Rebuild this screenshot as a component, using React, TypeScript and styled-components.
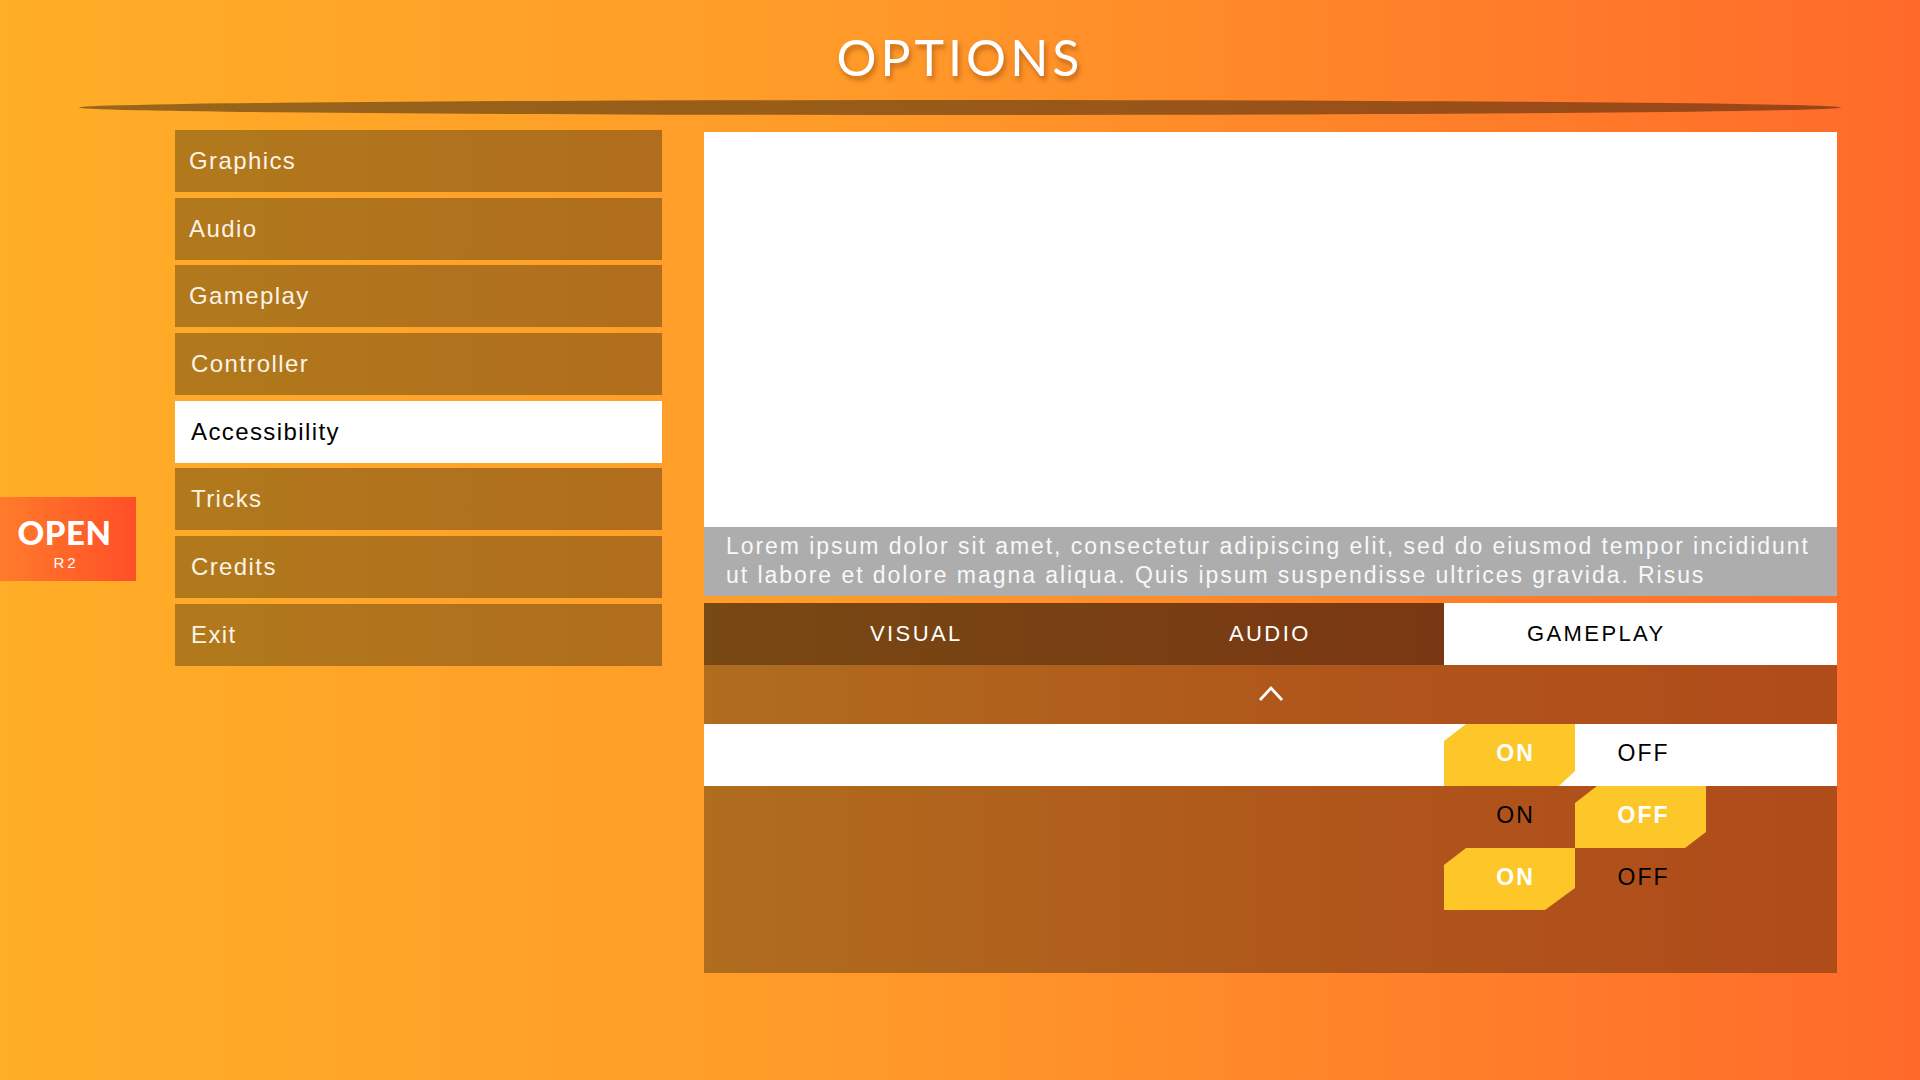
import React from "react";
import styled, { createGlobalStyle } from "styled-components";

const GlobalStyle = createGlobalStyle`
  html, body {
    margin: 0;
    padding: 0;
  }
  body {
    width: 1920px;
    height: 1080px;
    overflow: hidden;
    font-family: "Liberation Sans", Arial, sans-serif;
  }
  * { box-sizing: border-box; }
`;

const Page = styled.div`
  position: relative;
  width: 1920px;
  height: 1080px;
  background: linear-gradient(90deg, #ffae27 0%, #ff9a29 45%, #ff6a2a 100%);
  display: flex;
  flex-direction: column;
`;

const Header = styled.header`
  display: flex;
  flex-direction: column;
  align-items: center;
  padding-top: 32px;
`;

const Title = styled.h1`
  margin: 0;
  font-family: Lato, "Noto Sans", sans-serif;
  font-weight: 400;
  font-size: 50px;
  line-height: 50px;
  letter-spacing: 4px;
  color: #ffffff;
  text-shadow: 2px 4px 5px rgba(120, 50, 0, 0.45);
`;

const Divider = styled.div`
  width: 1762px;
  height: 15px;
  margin-top: 18px;
  border-radius: 50%;
  background: linear-gradient(90deg, #98661a 0%, #985a19 50%, #9a4419 100%);
`;

const Main = styled.main`
  display: flex;
  align-items: flex-start;
  gap: 42px;
  padding-left: 175px;
  margin-top: 15px;
`;

const Menu = styled.nav`
  width: 487px;
  display: flex;
  flex-direction: column;
  gap: 5.67px;
`;

const MenuItem = styled.div<{ $active?: boolean; $indent?: number }>`
  height: 62px;
  display: flex;
  align-items: center;
  padding-left: ${(p) => p.$indent ?? 14}px;
  font-size: 24px;
  letter-spacing: 1.4px;
  color: ${(p) => (p.$active ? "#000000" : "#fbf3e6")};
  background: ${(p) =>
    p.$active ? "#ffffff" : "linear-gradient(90deg, #b1791c 0%, #b06d1d 100%)"};
`;

const SideTab = styled.div`
  position: absolute;
  left: 0;
  top: 497px;
  width: 136px;
  height: 84px;
  display: flex;
  flex-direction: column;
  align-items: center;
  padding: 19px 7px 0 0;
  background: linear-gradient(90deg, #ff7c2b 0%, #ff4e27 100%);
  color: #ffffff;
`;

const SideTabTitle = styled.div`
  font-family: Lato, "Noto Sans", sans-serif;
  font-weight: 900;
  font-size: 33px;
  line-height: 33px;
  letter-spacing: 0.5px;
`;

const SideTabKey = styled.div`
  font-family: "Liberation Sans", Arial, sans-serif;
  font-size: 15px;
  line-height: 15px;
  margin-top: 6px;
  letter-spacing: 3px;
  padding-left: 3px;
`;

const Panel = styled.section`
  width: 1133px;
  margin-top: 2px;
  display: flex;
  flex-direction: column;
`;

const Preview = styled.div`
  height: 395px;
  background: #ffffff;
`;

const Caption = styled.p`
  margin: 0;
  height: 69px;
  padding: 5px 22px 0;
  background: #adadad;
  color: #f8f8f8;
  font-size: 23px;
  line-height: 29px;
  letter-spacing: 1.95px;
`;

const TabBar = styled.div`
  margin-top: 7px;
  height: 62px;
  display: flex;
`;

const DarkTabs = styled.div`
  width: 740px;
  display: flex;
  background: linear-gradient(90deg, #774913 0%, #7a3713 100%);
`;

const Tab = styled.div<{ $active?: boolean; $pad: number }>`
  ${(p) => (p.$active ? "flex: 1;" : "width: 370px;")}
  display: flex;
  align-items: center;
  padding-left: ${(p) => p.$pad}px;
  font-size: 22px;
  letter-spacing: 2.4px;
  color: ${(p) => (p.$active ? "#000000" : "#ffffff")};
  background: ${(p) => (p.$active ? "#ffffff" : "transparent")};
`;

const ChevronBar = styled.div`
  height: 59px;
  display: flex;
  align-items: center;
  justify-content: center;
  padding-bottom: 2px;
  background: linear-gradient(90deg, #b06d1e 0%, #b0561b 55%, #b04b1a 100%);
`;

const Options = styled.div`
  display: flex;
  flex-direction: column;
  padding-bottom: 63px;
  background: linear-gradient(90deg, #b06d1e 0%, #b0561b 55%, #b04b1a 100%);
`;

const Row = styled.div<{ $light?: boolean }>`
  height: 62px;
  display: flex;
  background: ${(p) => (p.$light ? "#ffffff" : "transparent")};
`;

const RowLabel = styled.div`
  width: 740px;
`;

const Toggle = styled.div<{ $active?: boolean; $cutX?: number; $cutY?: number; $shift: number }>`
  width: 131px;
  height: 62px;
  display: flex;
  align-items: center;
  justify-content: center;
  padding-left: ${(p) => p.$shift}px;
  padding-bottom: 4px;
  font-size: 23px;
  letter-spacing: 2px;
  font-weight: ${(p) => (p.$active ? 700 : 400)};
  color: ${(p) => (p.$active ? "#ffffff" : "#000000")};
  background: ${(p) => (p.$active ? "#fec729" : "transparent")};
  clip-path: ${(p) =>
    p.$active
      ? `polygon(22px 0, 100% 0, 100% calc(100% - ${p.$cutY ?? 16}px), calc(100% - ${p.$cutX ?? 20}px) 100%, 0 100%, 0 17px)`
      : "none"};
`;

const menuItems: { label: string; indent?: number }[] = [
  { label: "Graphics" },
  { label: "Audio" },
  { label: "Gameplay" },
  { label: "Controller", indent: 16 },
  { label: "Accessibility", indent: 16 },
  { label: "Tricks", indent: 16 },
  { label: "Credits", indent: 16 },
  { label: "Exit", indent: 16 },
];

const toggleRows = [
  { on: true, light: true, cutX: 16, cutY: 15 },
  { on: false, light: false, cutX: 21, cutY: 16 },
  { on: true, light: false, cutX: 30, cutY: 22 },
];

export default function App() {
  return (
    <Page>
      <GlobalStyle />
      <Header>
        <Title>OPTIONS</Title>
        <Divider />
      </Header>

      <SideTab>
        <SideTabTitle>OPEN</SideTabTitle>
        <SideTabKey>R2</SideTabKey>
      </SideTab>

      <Main>
        <Menu>
          {menuItems.map((m) => (
            <MenuItem key={m.label} $active={m.label === "Accessibility"} $indent={m.indent}>
              {m.label}
            </MenuItem>
          ))}
        </Menu>

        <Panel>
          <Preview />
          <Caption>
            Lorem ipsum dolor sit amet, consectetur adipiscing elit, sed do eiusmod tempor incididunt ut
            labore et dolore magna aliqua. Quis ipsum suspendisse ultrices gravida. Risus
          </Caption>
          <TabBar>
            <DarkTabs>
              <Tab $pad={166}>VISUAL</Tab>
              <Tab $pad={155}>AUDIO</Tab>
            </DarkTabs>
            <Tab $active $pad={83}>GAMEPLAY</Tab>
          </TabBar>
          <ChevronBar>
            <svg width="26" height="18" viewBox="0 0 26 18">
              <polyline points="2,15 13,3 24,15" fill="none" stroke="#ffffff" strokeWidth="2.8" />
            </svg>
          </ChevronBar>
          <Options>
            {toggleRows.map((r, i) => (
              <Row key={i} $light={r.light}>
                <RowLabel />
                <Toggle $active={r.on} $cutX={r.cutX} $cutY={r.cutY} $shift={12}>ON</Toggle>
                <Toggle $active={!r.on} $cutX={r.cutX} $cutY={r.cutY} $shift={6}>OFF</Toggle>
              </Row>
            ))}
          </Options>
        </Panel>
      </Main>
    </Page>
  );
}
